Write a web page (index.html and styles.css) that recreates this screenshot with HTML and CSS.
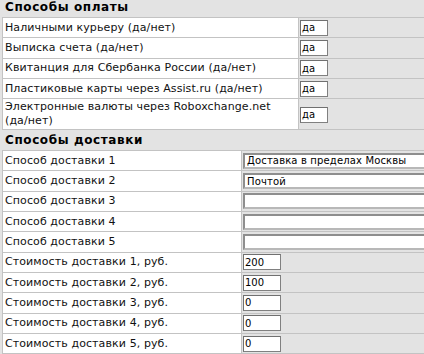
FILE: index.html
```html
<!DOCTYPE html>
<html lang="ru">
<head>
<meta charset="utf-8">
<title>Настройки</title>
<link rel="stylesheet" href="styles.css">
</head>
<body>
<div class="page">
  <div class="section-title first">Способы оплаты</div>
  <table class="form pay">
    <tr><td class="label">Наличными курьеру (да/нет)</td><td class="value"><input class="inp yn" value="да"></td></tr>
    <tr><td class="label">Выписка счета (да/нет)</td><td class="value"><input class="inp yn" value="да"></td></tr>
    <tr><td class="label">Квитанция для Сбербанка России (да/нет)</td><td class="value"><input class="inp yn" value="да"></td></tr>
    <tr><td class="label">Пластиковые карты через Assist.ru (да/нет)</td><td class="value"><input class="inp yn" value="да"></td></tr>
    <tr class="tall"><td class="label">Электронные валюты через Roboxchange.net <span class="nowrap">(да/нет)</span></td><td class="value"><input class="inp yn" value="да"></td></tr>
  </table>
  <div class="section-title">Способы доставки</div>
  <table class="form ship">
    <tr><td class="label">Способ доставки 1</td><td class="value"><input class="wide" value="Доставка в пределах Москвы"></td></tr>
    <tr><td class="label">Способ доставки 2</td><td class="value"><input class="wide" value="Почтой"></td></tr>
    <tr><td class="label">Способ доставки 3</td><td class="value"><input class="wide" value=""></td></tr>
    <tr><td class="label">Способ доставки 4</td><td class="value"><input class="wide" value=""></td></tr>
    <tr><td class="label">Способ доставки 5</td><td class="value"><input class="wide" value=""></td></tr>
    <tr><td class="label">Стоимость доставки 1, руб.</td><td class="value"><input class="inp cost" value="200"></td></tr>
    <tr><td class="label">Стоимость доставки 2, руб.</td><td class="value"><input class="inp cost" value="100"></td></tr>
    <tr><td class="label">Стоимость доставки 3, руб.</td><td class="value"><input class="inp cost" value="0"></td></tr>
    <tr><td class="label">Стоимость доставки 4, руб.</td><td class="value"><input class="inp cost" value="0"></td></tr>
    <tr><td class="label">Стоимость доставки 5, руб.</td><td class="value"><input class="inp cost" value="0"></td></tr>
  </table>
</div>
</body>
</html>
```
FILE: styles.css
```css
html, body {
  margin: 0;
  padding: 0;
  overflow: hidden;
  background: #e3e3e3;
}
.page {
  width: 480px;
  padding-left: 2px;
  font-family: "DejaVu Sans", Verdana, sans-serif;
  font-size: 11px;
  color: #111;
}
.section-title {
  height: 20px;
  line-height: 20px;
  padding-left: 3px;
  font-size: 12px;
  font-weight: bold;
  letter-spacing: 0.6px;
  color: #000;
}
.section-title.first {
  margin-top: -3px;
}
.nowrap {
  white-space: nowrap;
}
.form {
  border-collapse: collapse;
  width: 100%;
  border-left: 1px solid #c3c3c3;
}
.form tr {
  height: 20.3px;
}
.form td {
  border-top: 1px solid #c3c3c3;
  border-bottom: 1px solid #c3c3c3;
  padding: 0;
  vertical-align: middle;
}
.form .label {
  background: #fff;
  padding-left: 2px;
  line-height: 14px;
  letter-spacing: 0.1px;
}
.form .value {
  background: #e3e3e3;
  border-left: 1px solid #c3c3c3;
  padding-left: 1px;
}
.pay .label { width: 293px; }
.ship .label { width: 236px; }
.form tr.tall { height: 31px; }
.form tr.tall .value { padding-top: 1px; }
input {
  display: block;
  margin: 0;
  box-sizing: border-box;
  font-family: "DejaVu Sans", Verdana, sans-serif;
  font-size: 10px;
  color: #000;
  background: #fff;
  outline: none;
}
.inp {
  height: 16px;
  padding: 0 1px;
  border: 1px solid #808080;
  border-top-color: #707070;
  border-left-color: #707070;
}
.yn { width: 28px; }
.cost { width: 38px; }
.wide {
  width: 230px;
  height: 16px;
  padding: 0 2px;
  letter-spacing: 0.15px;
  border-style: solid;
  border-width: 2px 2px 2px 2px;
  border-color: #8e8e8e #d0d0d0 #b8b8b8 #8e8e8e;
}
```
